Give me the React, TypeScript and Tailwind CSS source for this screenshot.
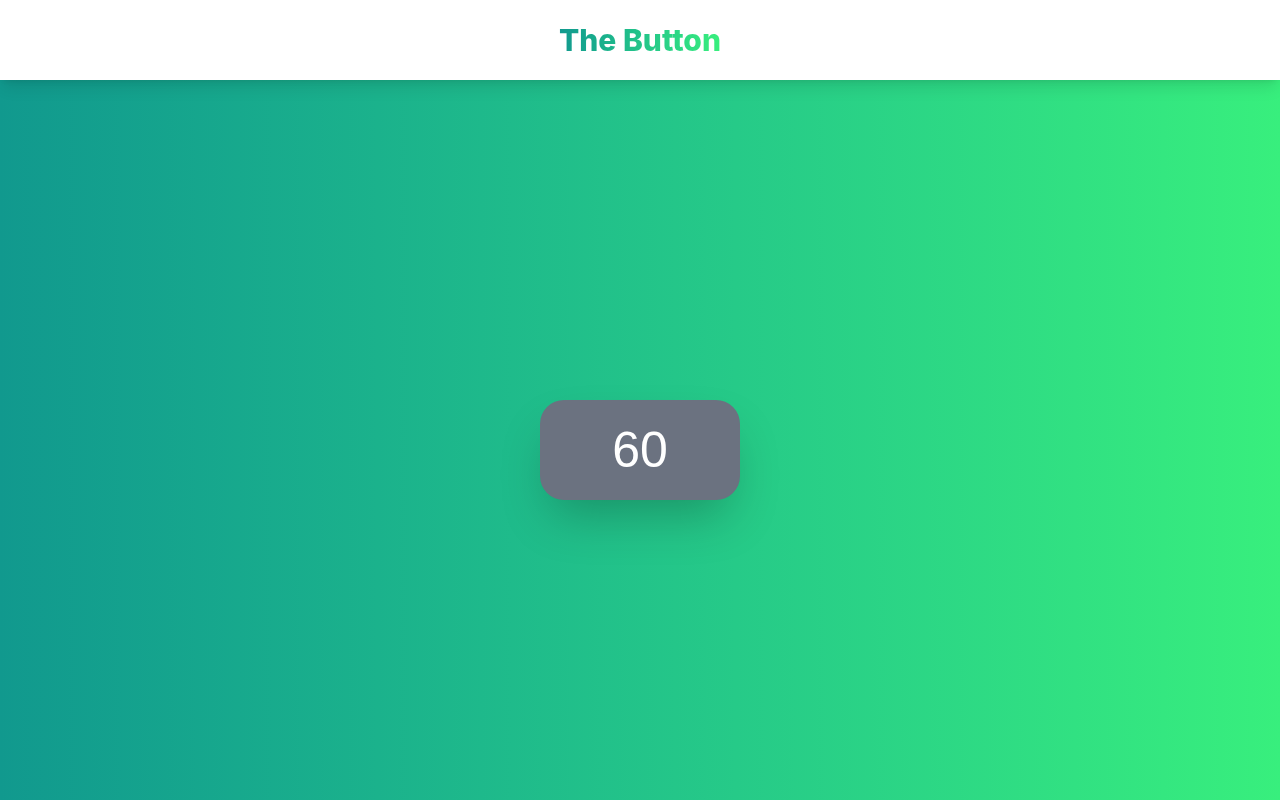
function App() {
  return (
    <div className="min-h-screen flex flex-col bg-gradient-to-r from-[#11998e] to-[#38ef7d]">
      <header className="h-20 bg-white shadow-lg flex items-center justify-center z-10">
        <h1 className="font-['Inter',sans-serif] font-extrabold text-3xl bg-gradient-to-r from-[#11998e] to-[#38ef7d] bg-clip-text text-transparent">
          The Button
        </h1>
      </header>
      <main className="flex-1 flex items-center justify-center pt-[20px]">
        <button className="w-[200px] h-[100px] rounded-3xl bg-[#6b7280] text-white text-[50px] font-['Liberation_Sans',Arial,sans-serif] shadow-2xl">
          60
        </button>
      </main>
    </div>
  )
}

export default App
